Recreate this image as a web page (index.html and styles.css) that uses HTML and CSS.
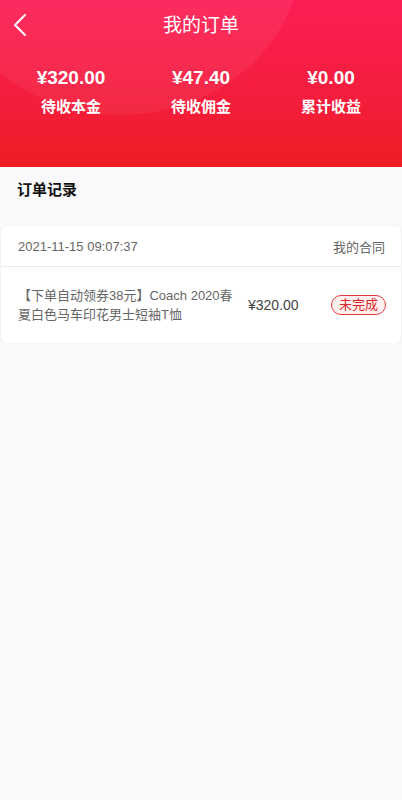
FILE: index.html
```html
<!DOCTYPE html>
<html>
  <head>
    <meta charset="UTF-8" />
    <title>我的订单</title>
    <link rel="stylesheet" href="styles.css">
  </head>
  <body>
    <div class="head">
      <div class="glow"></div>
      <div class="topbar">
        <a class="back" href="#">
          <svg width="14" height="24" viewBox="0 0 14 24"><path d="M12 2 L2 12 L12 22" fill="none" stroke="#fff" stroke-width="2" stroke-linecap="round" stroke-linejoin="round"/></svg>
        </a>
        <div class="title">我的订单</div>
      </div>
      <ul class="stats">
        <li><b>¥320.00</b><span>待收本金</span></li>
        <li><b>¥47.40</b><span>待收佣金</span></li>
        <li><b>¥0.00</b><span>累计收益</span></li>
      </ul>
    </div>
    <div class="sec-title">订单记录</div>
    <div class="card">
      <div class="card-hd">
        <span>2021-11-15 09:07:37</span>
        <span>我的合同</span>
      </div>
      <div class="card-bd">
        <div class="name">【下单自动领券38元】Coach 2020春夏白色马车印花男士短袖T恤</div>
        <div class="price">¥320.00</div>
        <div class="tag">未完成</div>
      </div>
    </div>
  </body>
</html>
```

FILE: styles.css
```css
*{margin: 0;padding: 0}
body{
  background: #f9f8fb;
  font-family: "Liberation Sans", "Noto Sans CJK SC", sans-serif;
  color: #333;
}
ul{
  list-style: none;
}
.head{
  position: relative;
  overflow: hidden;
  height: 167px;
  background: linear-gradient(180deg, #fc1e56 0%, #f41d3c 60%, #ef1c22 100%);
  color: #fff;
}
.glow{
  position: absolute;
  left: -60px;
  top: -215px;
  width: 362px;
  height: 330px;
  border-radius: 50%;
  background: rgba(255,255,255,0.06);
}
.topbar{
  position: relative;
  height: 52px;
  display: flex;
  align-items: center;
  justify-content: center;
}
.back{
  position: absolute;
  left: 13px;
  top: 13px;
  display: block;
  width: 14px;
  height: 24px;
}
.title{
  font-size: 19px;
  line-height: 52px;
}
.stats{
  position: relative;
  display: flex;
  padding: 14px 6px 0;
}
.stats li{
  flex: 1;
  display: flex;
  flex-direction: column;
  align-items: center;
  font-weight: bold;
}
.stats b{
  font-size: 19px;
  line-height: 24px;
}
.stats span{
  font-size: 15px;
  line-height: 20px;
  margin-top: 7px;
}
.sec-title{
  font-size: 15px;
  font-weight: bold;
  color: #111;
  padding: 0 17px;
  line-height: 46px;
  margin-bottom: 13px;
}
.card{
  margin: 0 1px;
  background: #fff;
  border-radius: 6px;
  box-shadow: 0 1px 4px rgba(0,0,0,0.06);
}
.card-hd{
  display: flex;
  justify-content: space-between;
  align-items: center;
  height: 40px;
  padding: 0 16px 0 17px;
  border-bottom: 1px solid #ececec;
  font-size: 13px;
  color: #666;
}
.card-bd{
  display: flex;
  align-items: center;
  height: 76px;
  padding: 0 15px 0 17px;
}
.name{
  width: 216px;
  font-size: 13px;
  line-height: 19px;
  color: #666;
}
.price{
  margin-left: 14px;
  font-size: 14px;
  color: #444;
}
.tag{
  margin-left: auto;
  width: 53px;
  height: 18px;
  line-height: 18px;
  text-align: center;
  font-size: 13px;
  color: #d9262a;
  background: #fff0f0;
  border: 1px solid #e4393c;
  border-radius: 10px;
}
```
